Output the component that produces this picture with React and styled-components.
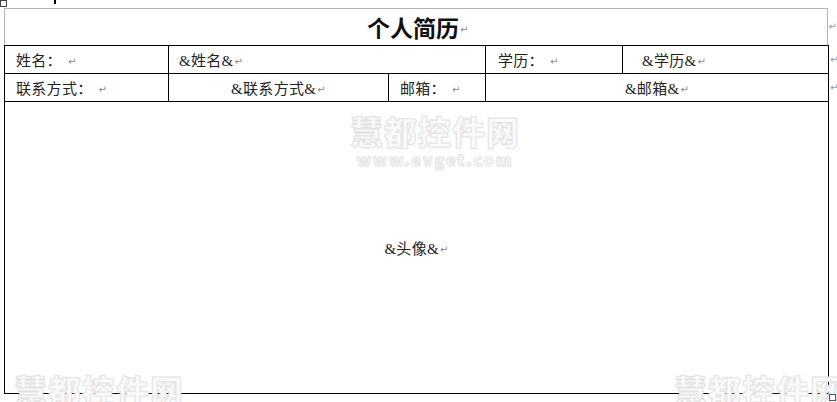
import React from 'react';
import styled, { createGlobalStyle } from 'styled-components';

const GlobalStyle = createGlobalStyle`
  html, body {
    margin: 0;
    padding: 0;
    background: #ffffff;
  }
  body {
    font-family: "Liberation Serif", "Noto Sans CJK SC", serif;
    color: #111111;
    overflow: hidden;
  }
`

const Page = styled.div`
  position: relative;
  width: 837px;
  height: 402px;
  overflow: hidden;
  padding: 8px 0 0 4px;
  box-sizing: border-box;
`

const Line = styled.div`
  display: flex;
  align-items: center;
`

const Title = styled.div`
  width: 825px;
  height: 37px;
  box-sizing: border-box;
  border: 1px solid #b4b4b4;
  border-bottom: none;
  display: flex;
  align-items: center;
  justify-content: center;
  font-size: 23px;
  font-weight: 700;
  padding-left: 4px;
`

const Cells = styled.div`
  display: flex;
  width: 825px;
  height: ${p => p.h}px;
  box-sizing: border-box;
  border-top: 1px solid #000;
  border-right: 1px solid #000;
  border-bottom: ${p => (p.last ? '1px solid #000' : 'none')};
`

const Cell = styled.div`
  width: ${p => p.w}px;
  box-sizing: border-box;
  border-left: 1px solid #000;
  display: flex;
  align-items: center;
  justify-content: ${p => (p.center ? 'center' : 'flex-start')};
  padding-left: ${p => p.pad || 0}px;
  font-size: 15px;
  color: #222;
  letter-spacing: 0.3px;
`

const Mark = styled.span`
  color: #8a8a8a;
  font-size: 10px;
  font-weight: 400;
  margin-left: ${p => p.gap || 1}px;
  font-family: "DejaVu Sans", sans-serif;
  position: relative;
  top: 2px;
`

const EndMark = styled.span`
  color: #9a9a9a;
  font-size: 10px;
  font-family: "DejaVu Sans", sans-serif;
  margin-left: 1px;
`

const Watermark = styled.div`
  position: absolute;
  left: ${p => p.x}px;
  top: ${p => p.y}px;
  display: flex;
  flex-direction: column;
  align-items: center;
  gap: 3px;
  font-family: "Noto Sans CJK SC", sans-serif;
  font-weight: 900;
  color: #fafafa;
  -webkit-text-stroke: 1px #e2e2e2;
  white-space: nowrap;
  line-height: 1;
  pointer-events: none;
`

const MarkName = styled.span`
  font-size: 33px;
  letter-spacing: 1px;
`

const MarkSite = styled.span`
  font-size: 16px;
  letter-spacing: 2px;
`

const MoveHandle = styled.div`
  position: absolute;
  left: 0;
  top: 0;
  width: 7px;
  height: 7px;
  box-sizing: border-box;
  border: 1px solid #444;
  background: #fff;
`

const Caret = styled.div`
  position: absolute;
  left: 54px;
  top: 0;
  width: 2px;
  height: 4px;
  background: #000;
`

const SizeHandle = styled.div`
  position: absolute;
  left: 829px;
  top: 394px;
  width: 7px;
  height: 7px;
  box-sizing: border-box;
  border: 1px solid #555;
  background: #fff;
`

const App = () => {
  return (
    <>
      <GlobalStyle />
      <Page>
        <Line>
          <Title>个人简历<Mark>↵</Mark></Title>
          <EndMark>↵</EndMark>
        </Line>
        <Line>
          <Cells h={28}>
            <Cell w={164} pad={11}>姓名：<Mark gap={6}>↵</Mark></Cell>
            <Cell w={317} pad={10}>&amp;姓名&amp;<Mark>↵</Mark></Cell>
            <Cell w={137} pad={12}>学历：<Mark gap={6}>↵</Mark></Cell>
            <Cell w={206} pad={19}>&amp;学历&amp;<Mark>↵</Mark></Cell>
          </Cells>
          <EndMark>↵</EndMark>
        </Line>
        <Line>
          <Cells h={28}>
            <Cell w={164} pad={11}>联系方式：<Mark gap={6}>↵</Mark></Cell>
            <Cell w={220} center>&amp;联系方式&amp;<Mark>↵</Mark></Cell>
            <Cell w={97} pad={11}>邮箱：<Mark gap={6}>↵</Mark></Cell>
            <Cell w={343} center>&amp;邮箱&amp;<Mark>↵</Mark></Cell>
          </Cells>
          <EndMark>↵</EndMark>
        </Line>
        <Line>
          <Cells h={293} last>
            <Cell w={824} center>&amp;头像&amp;<Mark>↵</Mark></Cell>
          </Cells>
        </Line>

        <Watermark x={350} y={115}>
          <MarkName>慧都控件网</MarkName>
          <MarkSite>www.evget.com</MarkSite>
        </Watermark>
        <Watermark x={14} y={374}>
          <MarkName>慧都控件网</MarkName>
        </Watermark>
        <Watermark x={674} y={374}>
          <MarkName>慧都控件网</MarkName>
        </Watermark>

        <MoveHandle />
        <Caret />
        <SizeHandle />
      </Page>
    </>
  );
}

export default App;
